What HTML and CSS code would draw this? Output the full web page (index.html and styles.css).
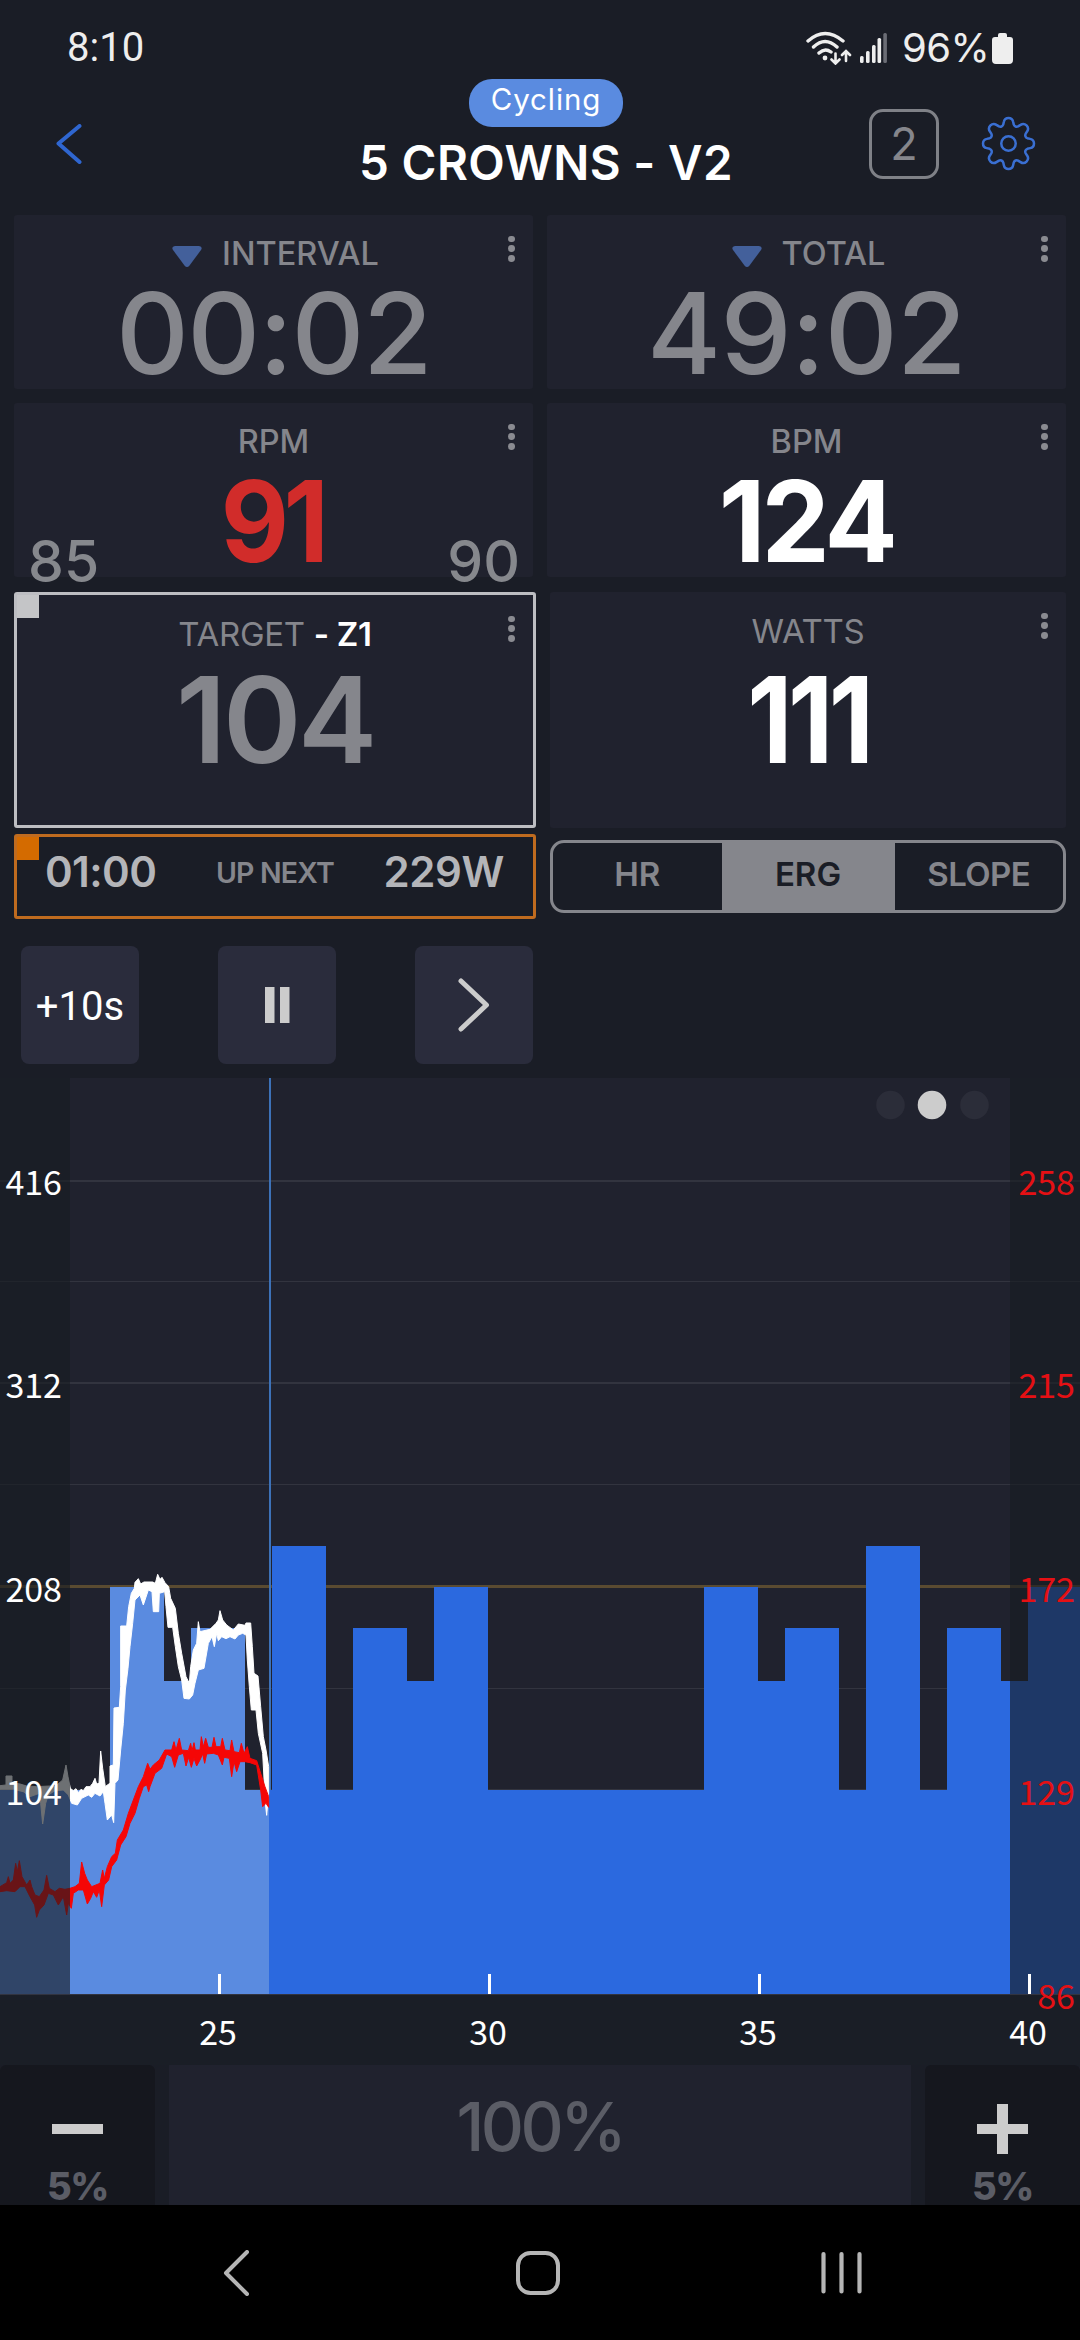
FILE: index.html
```html
<!DOCTYPE html>
<html lang="en">
<head>
<meta charset="utf-8">
<title>5 CROWNS - V2</title>
<link rel="stylesheet" href="styles.css">
</head>
<body>
<div class="screen">
  <header class="status">
    <span class="clock">8:10</span>
    <span class="status-right">
      <svg class="wifi" viewBox="0 0 46 34" width="46" height="34" fill="none" stroke="#eee" stroke-width="3.4" stroke-linecap="round">
        <path d="M2 10Q19-5 37 10M7.500 16Q19 5 31 16M13 22Q19 16.500 25 21"/>
        <circle cx="19" cy="27" r="2.400" fill="#eee" stroke="none"/>
        <path stroke-width="2.600" d="M29.500 22.500V32M25.500 28.500L29.500 32.500L33.500 28.500M40 30V20.500M36 24L40 20L44 24"/>
      </svg>
      <svg class="signal" viewBox="0 0 28 30" width="28" height="30">
        <g fill="#eee"><rect y="23" width="3.600" height="7" rx="1.500"/><rect x="6" y="18" width="3.600" height="12" rx="1.500"/><rect x="12" y="12" width="3.600" height="18" rx="1.500"/><rect x="17.500" y="5" width="3.600" height="25" rx="1.500"/></g>
        <rect x="23.300" width="3.600" height="30" rx="1.500" fill="#6b6d75"/>
      </svg>
      <span class="battery-text">96%</span>
      <svg viewBox="0 0 21 31" width="21" height="31"><path fill="#eee" d="M6 2Q6 0 8 0H13Q15 0 15 2V4H18Q21 4 21 7V27Q21 31 17 31H4Q0 31 0 27V7Q0 4 3 4H6Z"/></svg>
    </span>
  </header>

  <div class="titlebar">
    <svg class="back" viewBox="0 0 26 40" width="26" height="40" fill="none" stroke="#2f66d0" stroke-width="4" stroke-linecap="round" stroke-linejoin="round"><path d="M23.500 2L2.500 19.500L23.500 38"/></svg>
    <div class="title-group">
      <span class="pill">Cycling</span>
      <h1>5 CROWNS - V2</h1>
    </div>
    <div class="page-box">2</div>
    <svg class="gear" viewBox="-28.500 -28.500 57 57" width="55" height="55" fill="none" stroke="#3a6fd2" stroke-width="2.600" stroke-linejoin="round">
      <path id="gear" d="M-5.500-19.500L-4.800-22.500A4.900 4.900 0 0 1 4.800-22.500L5.500-19.500A3.200 3.200 0 0 0 9.900-17.700L12.500-19.300A4.900 4.900 0 0 1 19.300-12.500L17.700-9.900A3.200 3.200 0 0 0 19.500-5.500L22.500-4.800A4.900 4.900 0 0 1 22.500 4.800L19.500 5.500A3.200 3.200 0 0 0 17.700 9.900L19.300 12.500A4.900 4.900 0 0 1 12.500 19.300L9.900 17.700A3.200 3.200 0 0 0 5.500 19.500L4.800 22.500A4.900 4.900 0 0 1-4.800 22.500L-5.500 19.500A3.200 3.200 0 0 0-9.900 17.700L-12.500 19.300A4.900 4.900 0 0 1-19.300 12.500L-17.700 9.900A3.200 3.200 0 0 0-19.500 5.500L-22.500 4.800A4.900 4.900 0 0 1-22.500-4.800L-19.500-5.500A3.200 3.200 0 0 0-17.700-9.900L-19.300-12.500A4.900 4.900 0 0 1-12.500-19.300L-9.900-17.700A3.200 3.200 0 0 0-5.500-19.500Z"/>
      <circle r="7.500"/>
    </svg>
  </div>

  <div class="row row-time">
    <section class="card">
      <div class="label timer"><i class="tri"><svg viewBox="0 0 30 21" width="30" height="21"><path fill="#43609b" d="M3 0H27Q31 0.500 29 4L17.500 19.500Q15 22.500 12.500 19.500L1 4Q-1 0.500 3 0Z"/></svg></i>INTERVAL</div>
      <div class="value time">00:02</div>
      <span class="dots"><b></b><b></b><b></b></span>
    </section>
    <section class="card">
      <div class="label timer"><i class="tri"><svg viewBox="0 0 30 21" width="30" height="21"><path fill="#43609b" d="M3 0H27Q31 0.500 29 4L17.500 19.500Q15 22.500 12.500 19.500L1 4Q-1 0.500 3 0Z"/></svg></i>TOTAL</div>
      <div class="value time total">49:02</div>
      <span class="dots"><b></b><b></b><b></b></span>
    </section>
  </div>

  <div class="row row-rate">
    <section class="card">
      <div class="label">RPM</div>
      <div class="value rpm">91</div>
      <span class="dots"><b></b><b></b><b></b></span>
      <span class="limit low">85</span><span class="limit high">90</span>
    </section>
    <section class="card">
      <div class="label">BPM</div>
      <div class="value bpm">124</div>
      <span class="dots"><b></b><b></b><b></b></span>
    </section>
  </div>

  <div class="row row-power">
    <section class="card target">
      <div class="label light">TARGET <em>- Z1</em></div>
      <div class="value goal">104</div>
      <span class="dots"><b></b><b></b><b></b></span>
      <span class="corner"></span>
    </section>
    <section class="card">
      <div class="label light">WATTS</div>
      <div class="value watts">111</div>
      <span class="dots"><b></b><b></b><b></b></span>
    </section>
  </div>

  <div class="row row-next">
    <section class="next">
      <span class="next-time">01:00</span>
      <span class="next-label">UP NEXT</span>
      <span class="next-watts">229W</span>
      <span class="corner"></span>
    </section>
    <div class="modes"><span>HR</span><span class="on">ERG</span><span>SLOPE</span></div>
  </div>

  <div class="controls">
    <button class="plus10">+10s</button>
    <button><svg viewBox="0 0 25 36" width="25" height="36" fill="#ccc"><path d="M0 0H9.500V36H0ZM15 0H24.500V36H15Z"/></svg></button>
    <button><svg viewBox="0 0 32 54" width="32" height="54" fill="none" stroke="#ccc" stroke-width="5" stroke-linecap="round" stroke-linejoin="round"><path d="M3 3L28.500 27L3 51"/></svg></button>
  </div>

  <svg class="chart" viewBox="0 1078 1080 987" width="1080" height="987">
    <rect x="0" y="1078" width="1080" height="916" fill="#20222e"/>
    <g fill="#32343f">
      <rect y="1180" width="1080" height="2"/><rect y="1281" width="1080" height="1"/>
      <rect y="1382" width="1080" height="2"/><rect y="1484" width="1080" height="1"/>
      <rect y="1688" width="1080" height="1"/><rect y="1789" width="1080" height="1.500"/>
    </g>
    <rect y="1585" width="1080" height="3" fill="#5a4b31"/>
    <path fill="#5a8be0" d="M0 1994V1790H110V1587H164V1681H191V1628H245V1790H270V1994Z"/>
    <path fill="#2b69df" d="M269 1994V1790H272V1546H326V1790H353V1628H407V1681H434V1587H488V1790H704V1587H758V1681H785V1628H839V1790H866V1546H920V1790H947V1628H1001V1681H1028V1587H1080V1994Z"/>
    <rect x="269" y="1078" width="2" height="712" fill="#3d72b8"/>
    <g transform="translate(0 1520) scale(.33333)" stroke-width="3">
      <path fill="#fff" stroke="#fff" d="M0 797L18 795V768H36V788L60 792L80 798L110 800L150 798L165 800L188 780L198 735L204 770L211 805L220 812L228 806L235 818L243 808L250 812L258 800L270 800L278 790L285 775L290 792L297 790L302 693L308 745L316 800L322 795L330 790V738L340 735L342 564L358 562L362 500V318H380L386 260L394 220L403 205L405 187L415 176L422 192L432 186H458L466 190L473 163L480 178L486 172L495 188L506 200L512 235L526 265L535 340L545 400L558 470L568 490L572 440L580 390L590 370L595 305L600 335L630 328L648 310L655 300L660 272L668 300L680 315L700 330L715 312L735 316L738 309H752L757 380L762 460L774 468L782 560L790 650L798 690L806 740V820L800 886L796 850L788 700L775 640L768 570H754L748 500L742 420L738 345L728 340L715 345L705 357L690 350L678 356L665 350L655 362L650 340L643 380L636 350L625 370L612 445L595 450L585 490L578 525L568 537L552 535L545 480L535 440L526 380L518 322H504L498 260L494 215L478 220L476 275H460L456 215L445 210L430 255L420 225L405 240L398 310L390 380L384 445L376 510L370 610L362 690L354 780L345 790L341 908L335 885L322 900L315 850L310 815L300 828L285 820L275 832L265 825L245 835L232 855L222 852L215 850L205 825L190 810L165 812L145 825L137 850L128 912L122 850L118 820L90 830L70 815L40 808L0 808Z"/>
      <path fill="#f50606" stroke="#f50606" d="M0 1100L20 1088L25 1070L30 1090L40 1080L47 1030L52 1055L58 1022L66 1070L80 1095L90 1080L95 1100L105 1125L118 1130L132 1110L140 1066L148 1105L165 1115L178 1105L195 1108L210 1105L225 1100L238 1090L245 1026L254 1060L262 1080L275 1100L300 1090L308 1050L313 1075L322 1040L335 1010L346 1000L352 960L370 930L385 880L400 840L415 800L430 770L443 730L450 748L460 735L478 720L495 690L515 690L522 665L528 690L538 655L545 690L565 692L572 670L576 692L582 668L586 690L600 690L604 650L610 680L617 655L625 682L636 682L642 652L648 680L662 680L667 655L675 690L690 692L695 660L702 695L718 698L724 670L732 700L742 680L750 715L770 722L782 760L795 800L806 830V862L798 850L788 860L782 810L770 735L750 728L735 725L720 725L710 755L702 725L695 770L688 715L672 712L667 735L655 705L640 700L620 702L614 730L608 702L600 720L590 738L582 715L574 742L566 712L558 738L550 700L535 705L524 742L515 710L500 702L485 745L465 760L450 800L446 815L440 795L430 800L418 835L405 880L390 910L378 950L362 975L350 1020L335 1040L326 1080L313 1095L305 1160L298 1110L290 1132L280 1115L272 1135L262 1152L250 1110L235 1110L220 1120L214 1165L205 1150L200 1185L190 1130L175 1155L160 1125L145 1120L132 1155L118 1170L110 1192L104 1155L90 1130L75 1100L60 1100L45 1115L20 1112L0 1115Z"/>
    </g>
    <g fill="#171c21" fill-opacity=".63"><rect y="1078" width="70" height="916"/><rect x="1010" y="1078" width="70" height="916"/></g>
    <rect y="1994" width="1080" height="1" fill="#32343f"/>
    <g fill="#fff"><rect x="218" y="1974" width="3" height="20"/><rect x="488" y="1974" width="3" height="20"/><rect x="758" y="1974" width="3" height="20"/><rect x="1028" y="1974" width="3" height="20"/></g>
    <circle cx="890.500" cy="1105" r="14.300" fill="#2b2d39"/><circle cx="932" cy="1105" r="14.300" fill="#ccc"/><circle cx="974.500" cy="1105" r="14.300" fill="#2b2d39"/>
    <g class="axis watts-axis"><text x="62" y="1195">416</text><text x="62" y="1397.500">312</text><text x="62" y="1602">208</text><text x="62" y="1805">104</text></g>
    <g class="axis bpm-axis"><text x="1075" y="1195">258</text><text x="1075" y="1397.500">215</text><text x="1075" y="1602">172</text><text x="1075" y="1805">129</text><text x="1075" y="2009">86</text></g>
    <g class="axis time-axis"><text x="218" y="2045">25</text><text x="488" y="2045">30</text><text x="758" y="2045">35</text><text x="1028" y="2045">40</text></g>
  </svg>

  <div class="intensity">
    <div class="step minus"><svg viewBox="0 0 51 50" width="51" height="50"><path fill="#ccc" d="M0 20H51V30H0Z"/></svg><span>5%</span></div>
    <div class="percent">100%</div>
    <div class="step plus"><svg viewBox="0 0 51 50" width="51" height="50"><path fill="#ccc" d="M0 20H20V0H31V20H51V30H31V50H20V30H0Z"/></svg><span>5%</span></div>
  </div>

  <nav class="navbar">
    <svg viewBox="0 0 28 46" width="28" height="46" fill="none" stroke="#b5b5b5" stroke-width="4" stroke-linecap="round" stroke-linejoin="round"><path d="M24 2L3 23L24 44"/></svg>
    <svg viewBox="0 0 44 44" width="44" height="44" fill="none" stroke="#b5b5b5" stroke-width="4"><rect x="2" y="2" width="40" height="40" rx="12.500"/></svg>
    <svg viewBox="0 0 41 44" width="41" height="44" fill="none" stroke="#b5b5b5" stroke-width="4.200" stroke-linecap="round"><path d="M2.500 3V40.500M20.500 3V40.500M38.500 3V40.500"/></svg>
  </nav>
</div>
</body>
</html>
```
FILE: styles.css
```css
* { box-sizing: border-box; }
body { margin: 0; background: #1a1d26; }
svg { display: block; flex: none; }
.screen {
  width: 1080px; height: 2340px; overflow: hidden;
  display: flex; flex-direction: column;
  font-family: Inter, "Liberation Sans", sans-serif;
  color: #85868c; white-space: nowrap;
}

.status {
  height: 79px; padding: 18px 67px 0 67px;
  display: flex; justify-content: space-between; align-items: flex-start;
  font-family: Roboto, sans-serif; color: #eee; line-height: 60px;
}
.clock { font-size: 40px; }
.status-right { display: flex; align-items: center; height: 60px; }
.signal { margin-left: 8px; }
.battery-text { width: 86px; text-align: center; font-family: Inter, sans-serif; font-size: 40px; letter-spacing: -.5px; margin: 0 4px 0 14px; }

.titlebar { height: 136px; display: flex; padding: 0 44px 0 56px; align-items: flex-start; }
.back { margin-top: 45px; }
.title-group {
  width: 390px; margin-left: 269px;
  display: flex; flex-direction: column; align-items: center;
}
.pill {
  width: 154px; height: 48px; border-radius: 23px; background: #5a8be0; color: #fff;
  text-align: center; font-size: 29.5px; line-height: 41px; letter-spacing: .9px;
}
h1 { margin: 6px 0 0; font-size: 47.5px; line-height: 60px; font-weight: 600; letter-spacing: .37px; color: #fff; }
.page-box {
  width: 70px; height: 70px; margin: 30px 42px 0 128px;
  border: 3px solid #7f8187; border-radius: 14px;
  text-align: center; font-size: 45px; line-height: 64px;
}
.gear { margin-top: 37px; }

.row { display: flex; padding: 0 14px; }
.row-time { height: 188px; gap: 14px; }
.row-rate { height: 189px; gap: 14px; }
.row-power { height: 242px; gap: 14px; }
.row-next { height: 112px; gap: 14px; }

.card {
  position: relative; width: 519px; background: #20222e; border-radius: 3px;
  display: flex; flex-direction: column; align-items: center; padding-top: 19px;
}
.row-time .card, .row-rate .card { height: 174px; }
.row-power .card { width: 516px; height: 236px; }
.row-power .target { width: 522px; border: 3px solid #bdbec2; padding-top: 19px; }
.label { display: flex; align-items: center; height: 40px; font-size: 32.5px; line-height: 40px; font-weight: 500; }
.label.timer { margin-left: 4px; }
.label.light { font-size: 33px; font-weight: 400; white-space: pre; letter-spacing: -.3px; }
.label em { font-style: normal; font-weight: 600; color: #fff; }
.tri { margin-right: 20px; padding-top: 4px; }
.value { font-size: 113px; line-height: 84px; font-weight: 500; margin-top: 17px; }
.time { letter-spacing: -1.500px; }
.total { letter-spacing: -.6px; }
.rpm { color: #d12c2a; font-weight: 700; letter-spacing: -6px; transform: scaleX(.93); margin-right: 2px; }
.bpm { color: #fff; font-weight: 700; letter-spacing: -4px; transform: scaleX(.96); }
.goal { font-size: 119px; line-height: 88px; font-weight: 600; margin-top: 22px; letter-spacing: -3.400px; }
.watts { font-size: 119px; line-height: 88px; font-weight: 700; margin-top: 25px; letter-spacing: -5px; color: #fff; transform: scaleX(.88); }
.dots { position: absolute; right: 18.500px; top: 20.500px; display: flex; flex-direction: column; gap: 3.200px; }
.dots b { width: 6.800px; height: 6.800px; border-radius: 50%; background: #8a8b91; }
.limit { position: absolute; top: 139px; font-size: 57px; line-height: 40px; font-weight: 500; color: #86888d; }
.low { left: 14px; }
.high { right: 13px; }
.corner { position: absolute; left: 0; top: 0; width: 22px; height: 23px; background: #c4c5c7; }

.next {
  position: relative; width: 522px; height: 85px; border: 3px solid #bf6b1f; border-radius: 3px;
  display: flex; align-items: center; justify-content: space-between; padding: 0 29px 9px 28px;
  font-weight: 600; line-height: 44px;
}
.next .corner { background: #d46b00; }
.next-time { font-size: 42px; letter-spacing: -.6px; color: #b4b5b9; }
.next-label { font-size: 28.5px; letter-spacing: -.8px; padding: 2px 0 0 10px; }
.next-watts { font-size: 42px; letter-spacing: -.4px; color: #b4b5b9; }
.modes {
  width: 516px; height: 73px; margin-top: 6px; border: 3px solid #85868c; border-radius: 14px;
  display: flex; font-size: 33px; line-height: 62px; font-weight: 600; text-align: center;
}
.modes span { flex: 1; }
.modes .on { flex: 0 0 173px; margin: -3px 0; padding-top: 3px; background: #85868c; color: #1a1d26; }
.modes span:last-child { letter-spacing: -.6px; }

.controls { height: 132px; padding-left: 21px; display: flex; gap: 79px; }
button {
  width: 118px; height: 118px; padding: 0; border: 0; border-radius: 8px; background: #2a2c3c;
  display: flex; align-items: center; justify-content: center;
}
.plus10 { font: 40px/60px Roboto, sans-serif; color: #fff; padding-top: 4px; }

.chart { background: #1a1e26; }
.axis { font-family: "Noto Sans CJK JP", "Noto Sans", sans-serif; font-size: 34px; }
.watts-axis { fill: #fff; text-anchor: end; }
.bpm-axis { fill: #e51014; text-anchor: end; }
.time-axis { fill: #fff; text-anchor: middle; }

.intensity { height: 140px; display: flex; gap: 14px; }
.step {
  width: 155px; background: #15171e; border-radius: 6px 6px 0 0; color: #5b5d66;
  display: flex; flex-direction: column; align-items: center; padding-top: 39px;
  font-size: 38px; font-weight: 800; line-height: 40px; letter-spacing: -1.500px;
}
.step span { margin-top: 12px; }
.percent {
  width: 742px; background: #20222e; color: #5b5d66; text-align: center;
  font-size: 67px; font-weight: 500; line-height: 124px; letter-spacing: -3.500px;
}

.navbar { height: 135px; background: #000; display: flex; align-items: center; padding: 0 0 0 223px; }
.navbar svg:nth-child(2) { margin-left: 265px; }
.navbar svg:nth-child(3) { margin-left: 260.500px; }
```
